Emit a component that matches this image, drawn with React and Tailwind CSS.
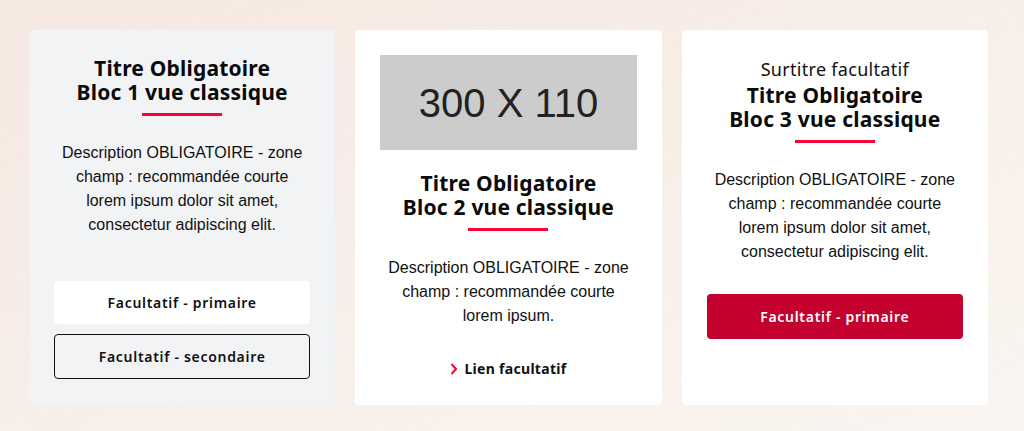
import React from 'react';

const titleFont = { fontFamily: '"Noto Sans", "Open Sans", sans-serif' };

const Underline = () => <div className="mx-auto mt-[9px] h-[3px] w-[80px] bg-[#f50537]" />;

const Title = ({ children }) => (
    <h2 className="text-[21px] font-bold leading-[24px] tracking-[0.2px] text-[#0a0a0a] text-center" style={titleFont}>
        {children}
    </h2>
);

const Desc = ({ children }) => (
    <p className="mt-[25px] px-[6px] text-center text-[16px] leading-[24px] text-[#111] font-['Liberation_Sans',Arial,sans-serif]">
        {children}
    </p>
);

const App = () => {
    return (
        <div className="w-[1024px] h-[431px] bg-gradient-to-br from-[#f5e8e0] to-[#faf5f1] pt-[30px] pl-[29px] pr-[36px]">
            <div className="grid grid-cols-3 gap-[20px] h-[375px]">
                {/* bloc 1 */}
                <div className="flex flex-col rounded-[4px] bg-[#f2f3f5] px-[25px] pt-[26px] pb-[26px]">
                    <Title>Titre Obligatoire<br />Bloc 1 vue classique</Title>
                    <Underline />
                    <Desc>Description OBLIGATOIRE - zone champ : recommandée courte lorem ipsum dolor sit amet, consectetur adipiscing elit.</Desc>
                    <div className="mt-auto flex flex-col gap-[10px]" style={titleFont}>
                        <button className="h-[43px] rounded-[4px] bg-white text-[14px] font-semibold tracking-[0.7px] text-[#111]">
                            Facultatif - primaire
                        </button>
                        <button className="h-[45px] rounded-[4px] border border-[#111] text-[14px] font-semibold tracking-[0.7px] text-[#111]">
                            Facultatif - secondaire
                        </button>
                    </div>
                </div>

                {/* bloc 2 */}
                <div className="flex flex-col rounded-[4px] bg-white px-[25px] pt-[25px]">
                    <div className="flex h-[95px] items-center justify-center bg-[#cccccc] text-[40px] text-[#222] font-['Liberation_Sans',Arial,sans-serif]">
                        300 X 110
                    </div>
                    <div className="mt-[21px]">
                        <Title>Titre Obligatoire<br />Bloc 2 vue classique</Title>
                    </div>
                    <Underline />
                    <Desc>Description OBLIGATOIRE - zone champ : recommandée courte lorem ipsum.</Desc>
                    <a href="#" className="mt-[30px] flex items-center justify-center gap-[6px] text-[14px] font-bold tracking-[0.3px] text-[#111]" style={titleFont}>
                        <svg width="8" height="12" viewBox="0 0 8 12" fill="none">
                            <path d="M1.5 1 L6 6 L1.5 11" stroke="#f50537" strokeWidth="2" />
                        </svg>
                        Lien facultatif
                    </a>
                </div>

                {/* bloc 3 */}
                <div className="flex flex-col rounded-[4px] bg-white px-[25px] pt-[27px]">
                    <div className="text-center text-[18px] leading-[24px] tracking-[0.3px] text-[#111]" style={titleFont}>Surtitre facultatif</div>
                    <div className="mt-[2px]">
                        <Title>Titre Obligatoire<br />Bloc 3 vue classique</Title>
                    </div>
                    <Underline />
                    <Desc>Description OBLIGATOIRE - zone champ : recommandée courte lorem ipsum dolor sit amet, consectetur adipiscing elit.</Desc>
                    <button className="mt-[30px] h-[45px] rounded-[4px] bg-[#c4002f] text-[14px] font-semibold tracking-[0.7px] text-white" style={titleFont}>
                        Facultatif - primaire
                    </button>
                </div>
            </div>
        </div>
    );
};

export default App;
